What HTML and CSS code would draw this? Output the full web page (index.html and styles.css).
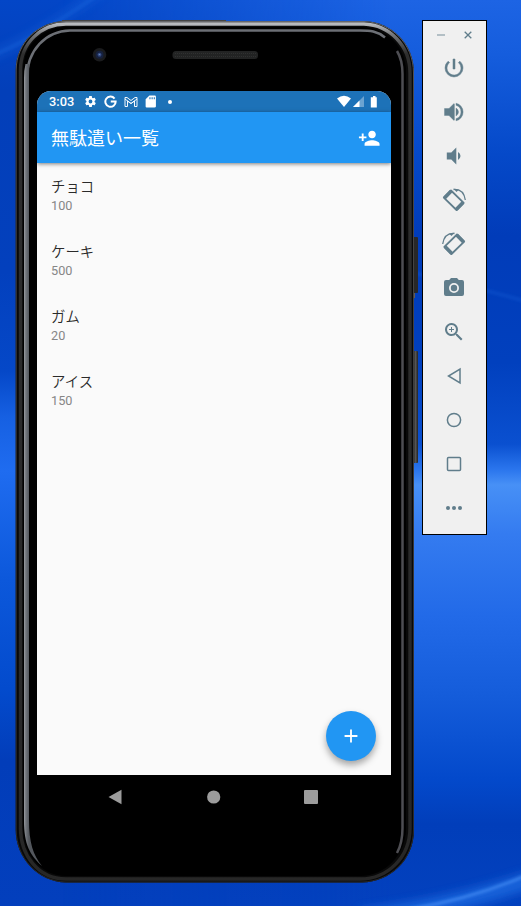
FILE: index.html
```html
<!DOCTYPE html>
<html lang="ja">
<head>
<meta charset="utf-8">
<title>無駄遣い一覧</title>
<link rel="stylesheet" href="styles.css">
</head>
<body>
<svg class="wallpaper" viewBox="0 0 521 906" preserveAspectRatio="none" aria-hidden="true">
  <defs>
    <linearGradient id="wl" x1="0" y1="0" x2="0" y2="1">
      <stop offset="0" stop-color="#0346c7"/><stop offset=".1" stop-color="#033fb9"/><stop offset=".3" stop-color="#0340bd"/>
      <stop offset=".41" stop-color="#0548c8"/><stop offset=".46" stop-color="#1660e2"/><stop offset=".52" stop-color="#1f6cf0"/>
      <stop offset=".64" stop-color="#0c58db"/><stop offset=".76" stop-color="#034bcd"/><stop offset=".84" stop-color="#023db9"/><stop offset="1" stop-color="#033fbd"/>
    </linearGradient>
    <linearGradient id="wr" x1="0" y1="0" x2="0" y2="1">
      <stop offset="0" stop-color="#1d64e4"/><stop offset=".06" stop-color="#155ddd"/><stop offset=".17" stop-color="#0549c9"/><stop offset=".26" stop-color="#013cb9"/>
      <stop offset=".4" stop-color="#0140be"/><stop offset=".49" stop-color="#0a50d0"/><stop offset=".518" stop-color="#2a75ed"/><stop offset=".535" stop-color="#4790f6"/>
      <stop offset=".59" stop-color="#347bf0"/><stop offset=".68" stop-color="#226ae8"/><stop offset=".77" stop-color="#145cda"/><stop offset=".86" stop-color="#0349cb"/><stop offset=".91" stop-color="#013eba"/><stop offset="1" stop-color="#0341be"/>
    </linearGradient>
    <linearGradient id="fade" x1=".12" y1="0" x2=".75" y2="0"><stop offset="0" stop-color="#000"/><stop offset="1" stop-color="#fff"/></linearGradient>
    <mask id="right"><rect width="521" height="906" fill="url(#fade)"/></mask>
    <filter id="soft" x="-20%" y="-100%" width="140%" height="300%"><feGaussianBlur stdDeviation="5"/></filter>
    <filter id="thin" x="-20%" y="-100%" width="140%" height="300%"><feGaussianBlur stdDeviation="1.6"/></filter>
  </defs>
  <rect width="521" height="906" fill="url(#wl)"/>
  <rect width="521" height="906" fill="url(#wr)" mask="url(#right)"/>
  <g fill="none" stroke="#1c6ae0">
    <path d="M-10 56Q40 36 105-12" stroke-width="8" opacity=".4" filter="url(#soft)"/>
    <path d="M-5 54Q25 44 95-3" stroke-width="2" opacity=".5" filter="url(#thin)"/>
    <path d="M410 272Q455 282 525 301" stroke-width="3" opacity=".3" filter="url(#thin)"/>
    <path d="M360 918Q455 906 530 880" stroke-width="17" opacity=".8" filter="url(#soft)"/>
    <path d="M410 909Q470 899 525 876" stroke="#4892f8" stroke-width="2.500" opacity=".8" filter="url(#thin)"/>
  </g>
</svg>

<main class="desktop">
  <section class="phone">
    <svg class="frame" viewBox="15 19 404 865" aria-hidden="true">
      <defs>
        <linearGradient id="edge" x1="0" y1="0" x2="0" y2="1"><stop offset="0" stop-color="#66676a"/><stop offset=".08" stop-color="#4c4a49"/><stop offset="1" stop-color="#292929"/></linearGradient>
        <linearGradient id="shine" x1="0" y1="0" x2="0" y2="1"><stop offset="0" stop-color="#b9bbbf"/><stop offset=".012" stop-color="#77797c"/><stop offset=".035" stop-color="#2e2e2e"/><stop offset="1" stop-color="#272727"/></linearGradient>
        <linearGradient id="btn" x1="0" y1="0" x2="1" y2="0"><stop offset="0" stop-color="#1a1a1a"/><stop offset=".5" stop-color="#555"/><stop offset="1" stop-color="#222"/></linearGradient>
        <linearGradient id="rail" gradientUnits="userSpaceOnUse" x1="24" y1="0" x2="29" y2="0"><stop offset="0" stop-color="#9a9da2"/><stop offset=".35" stop-color="#74787e"/><stop offset="1" stop-color="#53575d"/></linearGradient>
      </defs>
      <path d="M62 20.500H226" stroke="#444"/>
      <rect x="413" y="237" width="5" height="56" rx="1" fill="#282828"/>
      <rect x="413" y="293" width="2" height="5" fill="#655c51"/>
      <rect x="413" y="351" width="5" height="112" rx="1" fill="url(#btn)"/>
      <path d="M66 21H364C391 22 414 43 414 73V830C414 860 390 882 362 882.500H66C38 882 15.700 858 15.700 830V70C15.700 43 38 21 66 21Z" fill="#090909"/>
      <path d="M66 21.500H364C391 22.500 413.500 43 413.500 73V830C413.500 860 390 881.500 362 882H66C38 881.500 16.200 858 16.200 830V70C16.200 43 38 21.500 66 21.500Z" fill="none" stroke="url(#edge)"/>
      <path d="M66 24H364C390 25 410 46 410 73V828C410 857 388 879 360 879H66C38 879 20.500 855 20.500 828V70C20.500 43 41 24 66 24Z" fill="none" stroke="url(#shine)" stroke-width="3.400"/>
      <path d="M66 27H362C388 28 406 47 406 73V828C406 854 386 876 360 876H66C41 876 23 854 23 828V70C23 45 43 27 66 27Z" fill="#000"/>
      <path d="M385 37.500C377 31 370 30.500 360 30.500H70C46 31 27 50 27 78" fill="none" stroke="#6c6f75" stroke-width="2.500"/>
      <path d="M24 78Q24 70 25.500 64L29.500 64Q29 70 29 78V820C29 842 33 855 42 866C30 855 24 845 24 820Z" fill="url(#rail)"/>
      <path d="M397 51Q402.500 60 402.500 74V828Q402.500 843 397 853" fill="none" stroke="#4e4e53" stroke-width="2.500"/>
      <path d="M404.800 65V835" stroke="#000"/>
      <circle cx="99.500" cy="54.700" r="6.800" fill="#1a1b1d"/>
      <circle cx="99.500" cy="54.700" r="4" fill="#16213e"/>
      <circle cx="99.500" cy="54.700" r="2" fill="#31477e"/>
      <circle cx="99.500" cy="54.500" r=".8" fill="#6683b4"/>
      <rect x="172.500" y="51" width="85.500" height="8" rx="3.500" fill="#222323"/>
      <path d="M175 53.500H256M175 56.500H256" stroke="#303131" stroke-dasharray="1 1"/>
    </svg>
    <div class="screen">
      <header class="status">
        <span class="time">3:03</span>
        <svg class="s-icon" viewBox="0 0 24 24"><path d="M19.430 12.980c.04-.32.070-.64.070-.98s-.03-.66-.07-.98l2.110-1.650c.19-.15.240-.42.120-.64l-2-3.460c-.12-.22-.39-.3-.61-.22l-2.490 1c-.52-.4-1.080-.73-1.690-.98l-.38-2.650A.49.490 0 0 0 14 2h-4c-.25 0-.46.180-.49.420l-.38 2.650c-.61.250-1.170.590-1.690.98l-2.490-1c-.23-.09-.49 0-.61.220l-2 3.460c-.13.220-.07.490.12.640l2.110 1.650c-.04.320-.07.650-.07.980s.03.660.07.980l-2.110 1.650c-.19.150-.24.420-.12.640l2 3.460c.12.220.39.300.61.220l2.490-1c.52.400 1.080.730 1.690.980l.38 2.650c.03.240.24.420.49.420h4c.25 0 .46-.18.490-.42l.38-2.650c.61-.25 1.170-.59 1.690-.98l2.490 1c.23.090.49 0 .61-.22l2-3.460c.12-.22.070-.49-.12-.64l-2.110-1.650zM12 15.500a3.500 3.500 0 1 1 0-7 3.500 3.500 0 0 1 0 7z"/></svg>
        <svg class="s-icon" viewBox="0 0 24 24"><path d="M19.500 6.500A9.500 9.500 0 1 0 21.500 12H12.500" fill="none" stroke="#fff" stroke-width="3.700"/></svg>
        <svg class="s-icon wide" viewBox="0 0 28 24"><path d="M2 21V3h4l8 6 8-6h4v18h-5V10l-7 5-7-5v11zM2 6l12 9 12-9" fill="none" stroke="#fff" stroke-width="1.900"/></svg>
        <svg class="s-icon card" viewBox="0 0 24 24"><path fill-rule="evenodd" d="M20 1H10L3 8v13q0 2 2 2h14q3 0 3-2V3q0-2-2-2zM10 4h2v4h-2zm4 0h2v4h-2zm4 0h2v4h-2z"/></svg>
        <span class="dot"></span>
        <svg class="signals" viewBox="0 0 42 14"><path d="M0 3.500Q7-2 14 3.500L7 12z"/><path d="M27 1V12H16z" opacity=".35"/><path d="M22.500 5.500V12H16z"/><path d="M36 1h2.500v1.200h1.300V12.500h-6V2.200H36z"/></svg>
      </header>
      <div class="appbar">
        <h1>無駄遣い一覧</h1>
        <svg class="person" viewBox="0 0 24 24"><path d="M15 12c2.210 0 4-1.790 4-4s-1.790-4-4-4-4 1.790-4 4 1.790 4 4 4zm-9-2V7H4v3H1v2h3v3h2v-3h3v-2H6zm9 4c-2.670 0-8 1.340-8 4v2h16v-2c0-2.660-5.330-4-8-4z"/></svg>
      </div>
      <ul class="list">
        <li><span class="name">チョコ</span><span class="price">100</span></li>
        <li><span class="name">ケーキ</span><span class="price">500</span></li>
        <li><span class="name">ガム</span><span class="price">20</span></li>
        <li><span class="name">アイス</span><span class="price">150</span></li>
      </ul>
      <button class="fab" aria-label="追加"><svg viewBox="0 0 24 24"><path d="M19 13h-6v6h-2v-6H5v-2h6V5h2v6h6v2z"/></svg></button>
    </div>
    <nav class="navbar">
      <svg viewBox="0 0 16 16"><path d="M14.500 .800v14.400L1.500 8z"/></svg>
      <svg viewBox="0 0 16 16"><circle cx="8.700" cy="8" r="6.600"/></svg>
      <svg viewBox="0 0 16 16"><rect x="1" y="1" width="14" height="14" rx="1"/></svg>
    </nav>
  </section>

  <aside class="tools">
    <div class="window-controls">
      <svg viewBox="0 0 10 10"><path d="M1 5h8" opacity=".65"/></svg>
      <svg viewBox="0 0 10 10"><path d="M1.700 1.700l6.600 6.600M8.300 1.700L1.700 8.300"/></svg>
    </div>
    <svg class="tool" viewBox="0 0 24 24"><path d="M13 3h-2v10h2V3zm4.830 2.170l-1.420 1.420A6.920 6.920 0 0 1 19 12a7 7 0 1 1-11.420-5.420L6.170 5.170A8.930 8.930 0 0 0 3 12a9 9 0 0 0 18 0c0-2.740-1.230-5.180-3.170-6.830z" stroke="#607d8b" stroke-width=".5"/></svg>
    <svg class="tool" viewBox="0 0 24 24"><path d="M2.500 8.500v7H7l5 5v-17l-5 5zM14 8v8q2.500-1.500 2.500-4T14 8zm0-4.800v2.100a7 7 0 0 1 0 13.400v2.100a9 9 0 0 0 0-17.600z" stroke="#607d8b" stroke-width=".4"/><path d="M12.500 4v16" stroke="#607d8b" opacity=".5"/></svg>
    <svg class="tool" viewBox="0 0 24 24"><path d="M4.800 8.500v7h4.500l5 5v-17l-5 5zM16 8v8q2.500-1.500 2.500-4T16 8z"/></svg>
    <svg class="tool" viewBox="0 0 24 24"><g fill="none" stroke="#607d8b"><path d="M9 2.500L1.800 9.700 14.500 22l7.200-7.200z" stroke-width="1.800" stroke-linejoin="round"/><path d="M9.300 3.100L2.500 9.900M21 14.600L14.200 21.400" stroke-width="3.600"/><path d="M11.500 1.500Q21.500 .500 23.300 12" stroke-width="1.300"/></g><path d="M11.500.800l5.500.700-2.500 2.600z"/></svg>
    <svg class="tool flip" viewBox="0 0 24 24"><g fill="none" stroke="#607d8b"><path d="M9 2.500L1.800 9.700 14.500 22l7.200-7.200z" stroke-width="1.800" stroke-linejoin="round"/><path d="M9.300 3.100L2.500 9.900M21 14.600L14.200 21.400" stroke-width="3.600"/><path d="M11.500 1.500Q21.500 .500 23.300 12" stroke-width="1.300"/></g><path d="M11.500.800l5.500.700-2.500 2.600z"/></svg>
    <svg class="tool" viewBox="0 0 24 24"><path fill-rule="evenodd" d="M9 2L7.200 4H4q-2 0-2 2v12q0 2 2 2h16q2 0 2-2V6q0-2-2-2h-3.200L15 2zM12 7a5 5 0 1 0 0 10 5 5 0 0 0 0-10z"/><circle cx="12" cy="12" r="3.200"/></svg>
    <svg class="tool" viewBox="0 0 24 24"><path d="M15.500 14h-.79l-.28-.27A6.500 6.500 0 1 0 13.730 14.430l.27.280v.79l5 4.990L20.490 19zm-6 0a4.500 4.500 0 1 1 0-9 4.500 4.500 0 0 1 0 9zM12 10h-2v2H9v-2H7V9h2V7h1v2h2z"/></svg>
    <svg class="tool outline" viewBox="0 0 24 24"><path d="M18 5v14L6.500 12z"/></svg>
    <svg class="tool outline" viewBox="0 0 24 24"><circle cx="12" cy="12" r="6.600"/></svg>
    <svg class="tool outline" viewBox="0 0 24 24"><rect x="5.500" y="5.500" width="13" height="13" rx="1"/></svg>
    <svg class="tool" viewBox="0 0 24 24"><circle cx="6" cy="12" r="2"/><circle cx="12" cy="12" r="2"/><circle cx="18" cy="12" r="2"/></svg>
  </aside>
</main>
</body>
</html>
```
FILE: styles.css
```css
* { box-sizing: border-box; }
body { margin: 0; width: 521px; height: 906px; overflow: hidden; font-family: Roboto, "Noto Sans CJK JP", sans-serif; }
svg { display: block; flex: none; }
.wallpaper { position: absolute; inset: 0; width: 521px; height: 906px; }
.desktop { position: relative; display: flex; align-items: flex-start; gap: 8px; padding: 20px 0 0 16px; }

.phone { position: relative; width: 398px; height: 863px; padding: 71px 23px 0 21px; }
.frame { position: absolute; left: -1px; top: -1px; width: 404px; height: 865px; }
.screen { position: relative; height: 684px; background: #fafafa; border-radius: 14px 14px 0 0; overflow: hidden; }

.status { display: flex; align-items: center; height: 21px; padding: 0 12px; background: #1d72b8; }
.status svg { fill: #fff; }
.time { width: 35px; color: #fff; font-size: 12.800px; font-weight: 500; line-height: 21px; }
.s-icon { width: 13px; height: 13px; margin-right: 7px; }
.s-icon.wide { width: 14px; height: 12px; margin-right: 6px; }
.dot { width: 4px; height: 4px; margin-left: 4px; border-radius: 50%; background: #fff; }
.signals { width: 42px; height: 14px; margin-left: auto; }

.appbar { position: relative; display: flex; align-items: center; justify-content: space-between; height: 51px; padding: 1px 11px 0 14px; background: #2196f3; box-shadow: 0 1px 4px rgba(0, 0, 0, .5); }
.appbar h1 { margin: 0; padding-top: 1px; color: #fff; font-size: 18px; font-weight: 400; line-height: 26px; }
.person { width: 22.500px; height: 22.500px; fill: #fff; }

.list { margin: 0; padding: 13px 14px; list-style: none; }
.list li { display: flex; flex-direction: column; height: 65px; }
.name { color: #2a2a2a; font-size: 14.400px; font-weight: 350; line-height: 23px; }
.price { margin-top: -1px; color: #868686; font-size: 12.700px; line-height: 15px; }

.fab { position: absolute; right: 15px; bottom: 14px; display: grid; place-items: center; width: 50px; height: 50px; padding: 0; border: 0; border-radius: 50%; background: #2196f3; box-shadow: 0 4px 7px rgba(0, 0, 0, .35); }
.fab svg { width: 22px; height: 22px; fill: #fff; }

.navbar { position: relative; display: flex; justify-content: space-between; height: 44px; padding: 14px 72px 0 70px; }
.navbar svg { width: 16px; height: 16px; fill: #9c9c9c; }

.tools { display: flex; flex-direction: column; align-items: center; width: 65px; height: 515px; padding: 9px 1px 0 0; gap: 20px; border: 1px solid #000; background: #f0f0f0; }
.window-controls { display: flex; gap: 17px; height: 10px; margin: 0 -1px -4px 0; }
.window-controls svg { width: 10px; height: 10px; stroke: #607d8b; stroke-width: 1.300; }
.tool { width: 24px; height: 24px; margin-left: -1px; fill: #607d8b; overflow: visible; }
.flip { transform: scaleX(-1); }
.outline { fill: none; stroke: #607d8b; stroke-width: 1.500; }
```
